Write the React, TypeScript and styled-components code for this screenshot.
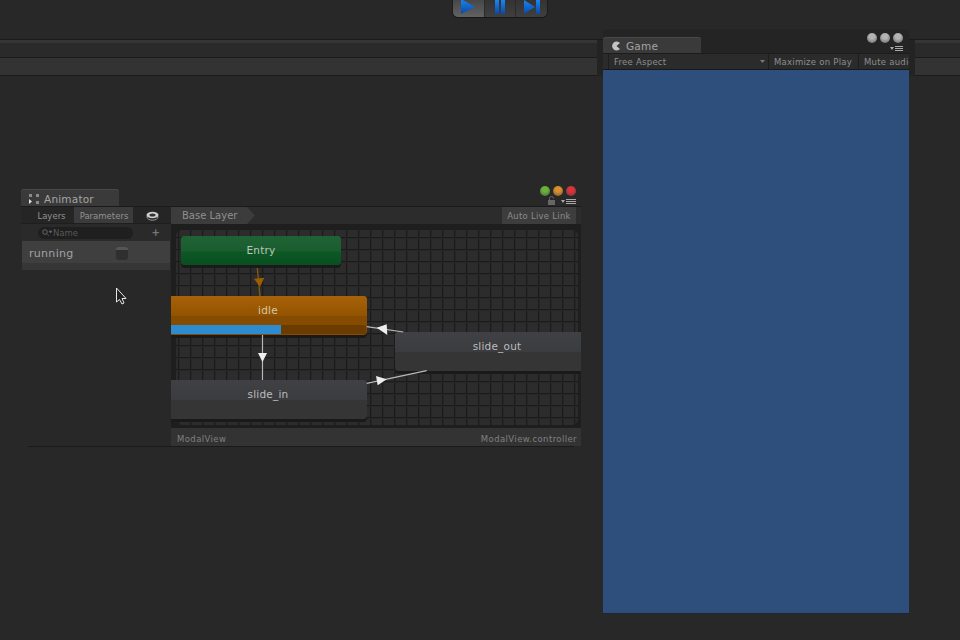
import React from 'react'
import styled, { createGlobalStyle } from 'styled-components'

const Global = createGlobalStyle`
  html, body { margin: 0; padding: 0; background: #282828; }
  body { font-family: 'DejaVu Sans', 'Liberation Sans', sans-serif; }
`

const Desktop = styled.div`
  position: relative;
  width: 960px;
  height: 640px;
  overflow: hidden;
  background: #282828;
`

/* top of the editor */
const PlayBar = styled.div`
  display: flex;
  width: 94px;
  height: 17px;
  margin-left: 453px;
  background: #3a3a3a;
  border-radius: 0 0 5px 5px;
  box-shadow: 0 1px 0 #161616, 1px 0 0 #1c1c1c, -1px 0 0 #1c1c1c;
  overflow: hidden;
`
const PlayButton = styled.div<{ $on?: boolean }>`
  flex: 1;
  display: flex;
  align-items: flex-start;
  justify-content: center;
  background: ${p => (p.$on ? 'linear-gradient(#474747, #626262)' : 'linear-gradient(#333, #3f3f3f)')};
  border-left: ${p => (p.$on ? 'none' : '1px solid #2a2a2a')};
`
const Bands = styled.div`
  margin-top: 22px;
  display: flex;
  flex-direction: column;
`
const Band = styled.div<{ $h: number; $bg: string }>`
  box-sizing: border-box;
  height: ${p => p.$h}px;
  background: ${p => p.$bg};
  border-top: 1px solid #1b1b1b;
`

/* floating windows */
const Win = styled.section<{ $x: number; $y: number; $w: number; $h: number }>`
  position: absolute;
  left: ${p => p.$x}px;
  top: ${p => p.$y}px;
  width: ${p => p.$w}px;
  height: ${p => p.$h}px;
  display: flex;
  flex-direction: column;
`
const TabRow = styled.div<{ $h: number }>`
  position: relative;
  flex: none;
  height: ${p => p.$h}px;
  display: flex;
`
const Tab = styled.div`
  width: 98px;
  box-sizing: border-box;
  display: flex;
  align-items: center;
  gap: 5px;
  padding: 2px 0 0 8px;
  background: #3a3a3a;
  border-radius: 3px 3px 0 0;
  box-shadow: inset 0 1px 0 #484848;
  font-size: 10.5px;
  color: #a4a4a4;
  letter-spacing: 0.2px;
`
const WinButtons = styled.div<{ $right: number; $top: number }>`
  position: absolute;
  display: flex;
  right: ${p => p.$right}px;
  top: ${p => p.$top}px;
  gap: 3px;
`
const Dot = styled.div<{ $c: string }>`
  width: 10px;
  height: 10px;
  border-radius: 50%;
  background: radial-gradient(circle at 50% 35%, ${p => p.$c}, ${p => p.$c} 30%, #3a3a3a 130%);
`
const MenuIcon = styled.svg<{ $right: number; $top: number }>`
  position: absolute;
  display: block;
  right: ${p => p.$right}px;
  top: ${p => p.$top}px;
`

const Body = styled.div`
  position: relative;
  flex: 1;
  display: grid;
  grid-template-columns: 150px 410px;
  min-height: 0;
  border-top: 1px solid #1a1a1a;
  &::after {
    content: '';
    position: absolute;
    left: 7px;
    right: 7px;
    bottom: -1px;
    height: 1px;
    background: #1a1a1a;
  }
`
const Side = styled.div`
  display: flex;
  flex-direction: column;
  background: #282828;
`
const SideTabs = styled.div`
  box-sizing: border-box;
  height: 17px;
  display: flex;
  background: #252525;
  border-bottom: 1px solid #1e1e1e;
`
const SideTab = styled.div<{ $w: number; $on?: boolean; $pad?: number }>`
  width: ${p => p.$w}px;
  box-sizing: border-box;
  padding: 1px 0 0 ${p => p.$pad ?? 0}px;
  display: flex;
  align-items: center;
  justify-content: center;
  font-size: 8.5px;
  color: #929292;
  background: ${p => (p.$on ? '#3b3b3b' : 'transparent')};
`
const SearchRow = styled.div`
  height: 17px;
  display: flex;
  align-items: center;
  padding: 0 11px 0 17px;
  justify-content: space-between;
  background: #2a2a2a;
`
const SearchBox = styled.div`
  width: 95px;
  height: 12px;
  box-sizing: border-box;
  display: flex;
  align-items: center;
  gap: 1px;
  padding-left: 4px;
  border-radius: 6px;
  background: #1f1f1f;
  font-size: 8.5px;
  color: #585858;
`
const Plus = styled.div`
  font-size: 10px;
  font-weight: bold;
  color: #777;
  line-height: 1;
`
const ParamRow = styled.div`
  height: 29px;
  width: 148px;
  margin-left: 1px;
  box-sizing: border-box;
  display: flex;
  justify-content: space-between;
  padding: 6px 42px 0 7px;
  background: linear-gradient(#3f3f3f 0, #3f3f3f 22px, #363636 22px);
  font-size: 11px;
  color: #a2a2a2;
  letter-spacing: 0.3px;
`
const Check = styled.div`
  width: 12px;
  height: 13px;
  border-radius: 3px;
  background: linear-gradient(#555 0, #555 3px, #2f2f2f 3px);
`

const Main = styled.div`
  display: flex;
  flex-direction: column;
  min-width: 0;
`
const Crumbs = styled.div`
  flex: none;
  height: 17px;
  display: flex;
  justify-content: space-between;
  background: #2c2c2c;
`
const Crumb = styled.div`
  width: 84px;
  box-sizing: border-box;
  padding-left: 11px;
  display: flex;
  align-items: center;
  font-size: 10px;
  color: #8f8f8f;
  background: #3c3c3c;
  clip-path: polygon(0 0, 76px 0, 100% 50%, 76px 100%, 0 100%);
`
const LiveLink = styled.div`
  width: 74px;
  margin-right: 5px;
  display: flex;
  align-items: center;
  justify-content: center;
  font-size: 8.5px;
  letter-spacing: 0.25px;
  color: #8c8c8c;
  background: #3d3d3d;
`
const Graph = styled.div`
  position: relative;
  flex: 1;
  overflow: hidden;
  background: #1e1e1e;
`
const Grid = styled.div`
  position: absolute;
  left: 5px;
  top: 6px;
  right: 3px;
  bottom: 3px;
  border-radius: 6px;
  background-color: #2c2c2c;
  background-image:
    linear-gradient(#1b1b1b 1px, #272727 1px, #272727 2px, transparent 2px),
    linear-gradient(90deg, #1b1b1b 1px, #272727 1px, #272727 2px, transparent 2px);
  background-size: 12px 12px;
  background-position: 2px 7px;
`
const Node = styled.div<{ $x: number; $y: number; $w: number; $tone: 'green' | 'orange' | 'grey' }>`
  position: absolute;
  left: ${p => p.$x}px;
  top: ${p => p.$y}px;
  width: ${p => p.$w}px;
  height: ${p => (p.$tone === 'green' ? 29 : 39)}px;
  border-radius: 4px;
  overflow: hidden;
  box-shadow: 0 3px 0 #1a1a1a;
  display: flex;
  flex-direction: column;
  background: ${p => (p.$tone === 'green' ? '#0b5a24' : p.$tone === 'orange' ? '#854b00' : '#353535')};
`
const NodeTitle = styled.div<{ $tone: 'green' | 'orange' | 'grey' }>`
  flex: none;
  box-sizing: border-box;
  height: ${p => (p.$tone === 'green' ? 29 : 20)}px;
  line-height: 1;
  padding-top: 9px;
  text-align: center;
  font-size: 10.5px;
  overflow: visible;
  color: ${p => (p.$tone === 'grey' ? '#bcbcbc' : p.$tone === 'green' ? '#b9c6bb' : '#d8c6a8')};
  letter-spacing: 0.2px;
  background: ${p =>
    p.$tone === 'green'
      ? 'linear-gradient(#1f6336, #1a5e2f 50%, #0c5825 55%, #094f1f)'
      : p.$tone === 'orange'
        ? 'linear-gradient(#a86208, #925300)'
        : 'linear-gradient(#3f4144, #3a3c3f)'};
`
const Track = styled.div`
  margin: 9px 1px 1px 0;
  height: 9px;
  border-radius: 0 2px 2px 0;
  background: #6b3c00;
`
const Fill = styled.div`
  height: 100%;
  background: #2e8bd0;
`
const Wires = styled.svg`
  position: absolute;
  left: 0;
  top: 0;
`
const Footer = styled.div`
  flex: none;
  box-sizing: border-box;
  height: 18px;
  display: flex;
  align-items: center;
  justify-content: space-between;
  padding: 4px 4px 0 6px;
  background: #333;
  font-size: 8.5px;
  letter-spacing: 0.4px;
  color: #808080;
`

/* game view */
const GameFrame = styled(Win)`
  background: #242424;
  border-radius: 4px 4px 0 0;
  padding-top: 8px;
  box-sizing: border-box;
  &::before,
  &::after {
    content: '';
    position: absolute;
    top: 11px;
    width: 6px;
    height: 36px;
    background: #232323;
  }
  &::before { left: -6px; }
  &::after { right: -6px; }
`
const GameBar = styled.div`
  flex: none;
  box-sizing: border-box;
  height: 17px;
  display: flex;
  padding-left: 5px;
  background: #2b2b2b;
  border-top: 1px solid #1c1c1c;
  border-bottom: 1px solid #161a20;
  font-size: 8.5px;
  letter-spacing: 0.25px;
  color: #8e8e8e;
  overflow: hidden;
  white-space: nowrap;
`
const BarCell = styled.div<{ $w: number }>`
  flex: none;
  width: ${p => p.$w}px;
  box-sizing: border-box;
  display: flex;
  align-items: center;
  justify-content: space-between;
  padding: 0 3px 0 5px;
  border-left: 1px solid #1e1e1e;
`
const GameView = styled.div`
  flex: 1;
  background: #2e4e7c;
  box-shadow: 0 1px 0 #1c2530;
`
const Cursor = styled.svg`
  position: absolute;
  left: 115px;
  top: 287px;
`

const Grad = () => (
  <defs>
    <linearGradient id="blue" x1="0" y1="0" x2="0" y2="1">
      <stop offset="0" stopColor="#1a86f0" />
      <stop offset="1" stopColor="#0848a8" />
    </linearGradient>
  </defs>
)

const App = () => (
  <Desktop>
    <Global />
    <PlayBar>
      <PlayButton $on>
        <svg width="16" height="14" viewBox="0 0 16 14">
          <Grad />
          <path d="M1 -1 L15 7 L1 14 Z" fill="url(#blue)" />
        </svg>
      </PlayButton>
      <PlayButton>
        <svg width="12" height="14" viewBox="0 0 12 14">
          <path d="M1 0h4v14H1zM7 0h4v14H7z" fill="url(#blue)" />
        </svg>
      </PlayButton>
      <PlayButton>
        <svg width="16" height="14" viewBox="0 0 16 14">
          <path d="M0 0 L11 7 L0 14 Z M12 0h4v14h-4z" fill="url(#blue)" />
        </svg>
      </PlayButton>
    </PlayBar>
    <Bands>
      <Band $h={18} $bg="linear-gradient(#353535 0, #353535 3px, #2a2a2a 3px)" />
      <Band $h={18} $bg="#333333" />
      <Band $h={1} $bg="#282828" />
    </Bands>

    <Win $x={21} $y={189} $w={560} $h={257}>
      <TabRow $h={17}>
        <Tab>
          <svg width="10" height="10" viewBox="0 0 10 10">
            <path d="M0 0h3v3H0zM7 0h3v3H7zM7 7h3v3H7z" fill="#8a8a8a" />
            <path d="M0 5l3 2.500L0 10z" fill="#e0e0e0" />
          </svg>
          Animator
        </Tab>
        <WinButtons $right={5} $top={-3}>
          <Dot $c="#6ab13a" />
          <Dot $c="#d98f2e" />
          <Dot $c="#d8343a" />
        </WinButtons>
        <MenuIcon $right={5} $top={7} width="28" height="9" viewBox="0 0 28 9">
          <path d="M0 4h7v5H0z" fill="#666" />
          <path d="M1.500 4V2.500a2 2 0 0 1 4 0" stroke="#666" fill="none" />
          <path d="M13 4h4l-2 3z M18 3h10v1H18z M18 5h10v1H18z M18 7h10v1H18z" fill="#a8a8a8" />
        </MenuIcon>
      </TabRow>
      <Body>
        <Side>
          <SideTabs>
            <SideTab $w={53} $pad={8}>Layers</SideTab>
            <SideTab $w={59} $on $pad={1}>Parameters</SideTab>
            <SideTab $w={38}>
              <svg width="13" height="10" viewBox="0 0 13 10">
                <ellipse cx="6.500" cy="6" rx="5.500" ry="3.200" fill="none" stroke="#999" />
                <ellipse cx="6.500" cy="4" rx="6" ry="3.200" fill="#cfcfcf" />
                <ellipse cx="6.500" cy="4" rx="3" ry="1.500" fill="#333" />
              </svg>
            </SideTab>
          </SideTabs>
          <SearchRow>
            <SearchBox>
              <svg width="10" height="8" viewBox="0 0 10 8">
                <circle cx="3" cy="3" r="2.300" fill="none" stroke="#666" />
                <path d="M5 5l2 2M7 2h3L8.500 4z" stroke="#666" fill="#666" strokeWidth="0.6" />
              </svg>
              Name
            </SearchBox>
            <Plus>+</Plus>
          </SearchRow>
          <ParamRow>
            running
            <Check />
          </ParamRow>
        </Side>
        <Main>
          <Crumbs>
            <Crumb>Base Layer</Crumb>
            <LiveLink>Auto Live Link</LiveLink>
          </Crumbs>
          <Graph>
            <Grid />
            <Node $x={10} $y={12} $w={160} $tone="green">
              <NodeTitle $tone="green">Entry</NodeTitle>
            </Node>
            <Node $x={-2} $y={72} $w={198} $tone="orange">
              <NodeTitle $tone="orange">idle</NodeTitle>
              <Track>
                <Fill style={{ width: `${(112 / 197) * 100}%` }} />
              </Track>
            </Node>
            <Node $x={224} $y={108} $w={204} $tone="grey">
              <NodeTitle $tone="grey">slide_out</NodeTitle>
            </Node>
            <Node $x={-2} $y={156} $w={198} $tone="grey">
              <NodeTitle $tone="grey">slide_in</NodeTitle>
            </Node>
            <Wires width="410" height="204" viewBox="0 0 410 204">
              <path d="M86.300 44 L89 72" stroke="#8a5a10" strokeWidth="1.300" />
              <path d="M83 54.700 L93.300 53.700 L89 62.700 Z" fill="#9a6000" />
              <path d="M91.500 111 V156" stroke="#b8b8b8" strokeWidth="1.200" />
              <path d="M87 129 H96 L91.500 138 Z" fill="#eee" />
              <path d="M195.700 102.700 L232.300 108" stroke="#b8b8b8" strokeWidth="1.200" />
              <path d="M205.700 103.700 L215.700 100.300 L216.300 111 Z" fill="#eee" />
              <path d="M195.700 159.300 L255.700 146.700" stroke="#b8b8b8" strokeWidth="1.200" />
              <path d="M215.700 155.300 L205 152 L206.700 161.300 Z" fill="#eee" />
            </Wires>
          </Graph>
          <Footer>
            <span>ModalView</span>
            <span>ModalView.controller</span>
          </Footer>
        </Main>
      </Body>
    </Win>

    <GameFrame $x={603} $y={29} $w={306} $h={584}>
      <TabRow $h={16}>
        <Tab>
          <svg width="10" height="10" viewBox="0 0 10 10">
            <path d="M9 2A4.500 4.500 0 1 0 9 8L5.500 5 Z" fill="#c4c4c4" />
          </svg>
          Game
        </Tab>
        <WinButtons $right={6} $top={-4}>
          <Dot $c="#b4b4b4" />
          <Dot $c="#b4b4b4" />
          <Dot $c="#b4b4b4" />
        </WinButtons>
        <MenuIcon $right={5} $top={8} width="14" height="6" viewBox="0 0 14 6">
          <path d="M0 2h4l-2 3z M5 1h8v1H5z M5 3h8v1H5z M5 5h8v1H5z" fill="#a8a8a8" />
        </MenuIcon>
      </TabRow>
      <GameBar>
        <BarCell $w={160}>
          Free Aspect
          <svg width="5" height="3" viewBox="0 0 5 3">
            <path d="M0 0h5L2.500 3z" fill="#777" />
          </svg>
        </BarCell>
        <BarCell $w={90}>Maximize on Play</BarCell>
        <BarCell $w={60}>Mute audio</BarCell>
      </GameBar>
      <GameView />
    </GameFrame>

    <Cursor width="12" height="18" viewBox="0 0 12 18">
      <path d="M1.500 1 V15 L4.500 12.500 L7 17 L9 16 L7 11.500 H11 Z" fill="#222" stroke="#e8e8e8" strokeWidth="1" />
    </Cursor>
  </Desktop>
)

export default App
